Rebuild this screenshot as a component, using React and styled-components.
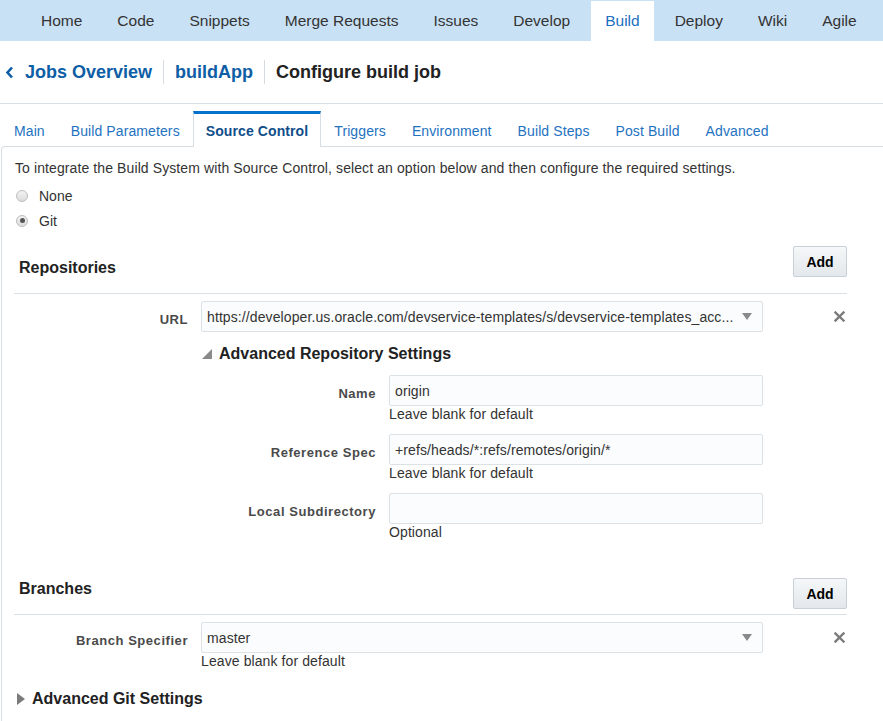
import React from "react";
import styled, { createGlobalStyle } from "styled-components";

const GlobalStyle = createGlobalStyle`
  body {
    margin: 0;
    background: #fff;
    font-family: "Liberation Sans", Arial, sans-serif;
    color: #333;
  }
`;

const navItems = ["Home", "Code", "Snippets", "Merge Requests", "Issues", "Develop", "Build", "Deploy", "Wiki", "Agile"];
const tabs = ["Main", "Build Parameters", "Source Control", "Triggers", "Environment", "Build Steps", "Post Build", "Advanced"];

const Close = () => (
  <svg width="11" height="11" viewBox="0 0 11 11">
    <path d="M1.5 1.5 L9.5 9.5 M9.5 1.5 L1.5 9.5" stroke="#7b7b7b" strokeWidth="2.4" strokeLinecap="square" />
  </svg>
);

const Caret = () => (
  <svg width="10" height="7" viewBox="0 0 10 7">
    <polygon points="0,0 10,0 5,7" fill="#8a8a8a" />
  </svg>
);

export default function App() {
  return (
    <Page>
      <GlobalStyle />
      <TopNav>
        {navItems.map((n) => (
          <NavItem key={n} $active={n === "Build"}>{n}</NavItem>
        ))}
      </TopNav>

      <Breadcrumb>
        <BackLink>
          <svg width="9" height="13" viewBox="0 0 9 13">
            <path d="M7 1.5 L2.5 6.5 L7 11.5" fill="none" stroke="#0e5ea6" strokeWidth="2.6" />
          </svg>
          <Crumb $link>Jobs Overview</Crumb>
        </BackLink>
        <Crumb $link $sep>buildApp</Crumb>
        <Crumb $sep>Configure build job</Crumb>
      </Breadcrumb>

      <TabBar>
        {tabs.map((t) => (
          <Tab key={t} $active={t === "Source Control"}>{t}</Tab>
        ))}
      </TabBar>

      <Panel>
        <Intro>To integrate the Build System with Source Control, select an option below and then configure the required settings.</Intro>
        <RadioList>
          <RadioRow><Radio /> None</RadioRow>
          <RadioRow><Radio $checked /> Git</RadioRow>
        </RadioList>

        <Section>
          <SectionHeader $top={13} $bottom={15}>
            <SectionTitle $pad={12}>Repositories</SectionTitle>
            <AddButton>Add</AddButton>
          </SectionHeader>

          <FormRow>
            <Label>URL</Label>
            <Field>
              <FieldText>https://developer.us.oracle.com/devservice-templates/s/devservice-templates_acc...</FieldText>
              <Caret />
            </Field>
            <CloseCell><Close /></CloseCell>
          </FormRow>

          <Nested>
            <Disclosure $mt={12} $pl={1}>
              <svg width="10" height="10" viewBox="0 0 10 10">
                <polygon points="10,0 10,10 0,10" fill="#8a8a8a" />
              </svg>
              Advanced Repository Settings
            </Disclosure>

            <NestedRow>
              <Label>Name</Label>
              <Field><FieldText>origin</FieldText></Field>
              <Hint>Leave blank for default</Hint>
            </NestedRow>
            <NestedRow>
              <Label>Reference Spec</Label>
              <Field><FieldText>+refs/heads/*:refs/remotes/origin/*</FieldText></Field>
              <Hint>Leave blank for default</Hint>
            </NestedRow>
            <NestedRow>
              <Label>Local Subdirectory</Label>
              <Field />
              <Hint>Optional</Hint>
            </NestedRow>
          </Nested>

          <SectionHeader $top={37} $bottom={5}>
            <SectionTitle $pad={1}>Branches</SectionTitle>
            <AddButton>Add</AddButton>
          </SectionHeader>

          <FormRow>
            <Label>Branch Specifier</Label>
            <Field>
              <FieldText>master</FieldText>
              <Caret />
            </Field>
            <CloseCell><Close /></CloseCell>
            <Hint>Leave blank for default</Hint>
          </FormRow>

          <Disclosure $mt={19} $pl={3}>
            <svg width="8" height="12" viewBox="0 0 8 12">
              <polygon points="0,0 8,6 0,12" fill="#7b7b7b" />
            </svg>
            Advanced Git Settings
          </Disclosure>
        </Section>
      </Panel>
    </Page>
  );
}

const Page = styled.div`
  width: 883px;
  min-height: 721px;
  overflow: hidden;
`;

const TopNav = styled.nav`
  display: flex;
  align-items: flex-end;
  gap: 7px;
  height: 41px;
  padding-left: 27px;
  background: #c9e1f5;
`;

const NavItem = styled.div`
  height: 40px;
  line-height: 40px;
  padding: 0 14px;
  font-size: 15.5px;
  white-space: nowrap;
  color: ${(p) => (p.$active ? "#1a6fc1" : "#333")};
  background: ${(p) => (p.$active ? "#fff" : "transparent")};
`;

const Breadcrumb = styled.div`
  display: flex;
  align-items: center;
  height: 62px;
  padding-left: 5px;
  border-bottom: 1px solid #d9e0e6;
`;

const BackLink = styled.div`
  display: flex;
  align-items: center;
`;

const Crumb = styled.div`
  font-size: 18px;
  font-weight: bold;
  line-height: 24px;
  padding: 0 11px;
  color: ${(p) => (p.$link ? "#0e5ea6" : "#222")};
  border-left: ${(p) => (p.$sep ? "1px solid #d5dbe0" : "none")};
`;

const TabBar = styled.div`
  display: flex;
  align-items: flex-end;
  height: 42px;
  padding-left: 1px;
`;

const Tab = styled.div`
  position: relative;
  z-index: 1;
  box-sizing: content-box;
  padding: 2px 12px 0;
  height: 31px;
  line-height: 31px;
  margin-bottom: -1px;
  font-size: 14px;
  letter-spacing: 0.1px;
  white-space: nowrap;
  border: 1px solid transparent;
  border-top: 3px solid transparent;
  border-bottom: none;
  color: #1e72c0;
  ${(p) =>
    p.$active &&
    `
    background: #fff;
    color: #104e8a;
    font-weight: bold;
    border-color: #d6dde3;
    border-top-color: #0572ce;
  `}
`;

const Panel = styled.div`
  border-top: 1px solid #d6dde3;
  border-left: 1px solid #d6dde3;
  border-top-left-radius: 4px;
  margin-left: 1px;
  padding: 11px 0 14px 12px;
`;

const Intro = styled.p`
  margin: 0;
  padding-left: 1px;
  font-size: 14px;
  letter-spacing: 0.1px;
  line-height: 20px;
`;

const RadioList = styled.div`
  margin-top: 5px;
  padding-left: 2px;
`;

const RadioRow = styled.label`
  display: flex;
  align-items: center;
  gap: 11px;
  height: 25px;
  font-size: 14px;
  color: #333;
`;

const Radio = styled.span`
  position: relative;
  width: 12px;
  height: 12px;
  box-sizing: border-box;
  border-radius: 50%;
  border: 1px solid #bdbdbd;
  background: linear-gradient(#f2f2f2, #dcdcdc);

  &::after {
    content: "";
    display: ${(p) => (p.$checked ? "block" : "none")};
    position: absolute;
    left: 2.5px;
    top: 2.5px;
    width: 5px;
    height: 5px;
    border-radius: 50%;
    background: #555;
  }
`;

const Section = styled.div`
  width: 833px;
`;

const SectionHeader = styled.div`
  display: flex;
  justify-content: space-between;
  align-items: flex-start;
  margin-top: ${(p) => p.$top}px;
  padding-bottom: ${(p) => p.$bottom}px;
  border-bottom: 1px solid #d9e0e6;
`;

const SectionTitle = styled.h2`
  margin: 0;
  padding: ${(p) => p.$pad}px 0 0 5px;
  font-size: 16px;
  line-height: 20px;
  font-weight: bold;
  color: #222;
`;

const AddButton = styled.button`
  width: 54px;
  height: 31px;
  padding: 0;
  border: 1px solid #c7d0d8;
  border-radius: 2px;
  background: linear-gradient(#f5f7f8, #e3e8ec);
  font-family: inherit;
  font-size: 14px;
  font-weight: bold;
  color: #000;
`;

const FormRow = styled.div`
  display: grid;
  grid-template-columns: 174px 562px 1fr;
  column-gap: 13px;
  margin-top: 7px;
`;

const Nested = styled.div`
  margin-left: 187px;
`;

const NestedRow = styled.div`
  display: grid;
  grid-template-columns: 175px 374px;
  column-gap: 13px;
  margin-top: 11px;
`;

const Label = styled.div`
  height: 31px;
  box-sizing: border-box;
  padding-top: 7px;
  line-height: 24px;
  text-align: right;
  font-size: 13px;
  font-weight: bold;
  letter-spacing: 0.55px;
  color: #4a4a4a;
  white-space: nowrap;
`;

const Field = styled.div`
  display: flex;
  align-items: center;
  gap: 8px;
  height: 31px;
  box-sizing: border-box;
  padding: 0 10px 0 5px;
  border: 1px solid #dbe1e5;
  border-radius: 2px;
  background: #fbfcfd;
`;

const FieldText = styled.span`
  flex: 1;
  overflow: hidden;
  white-space: nowrap;
  font-size: 14px;
  letter-spacing: 0.1px;
  color: #333;
`;

const CloseCell = styled.div`
  display: flex;
  align-items: center;
  justify-content: flex-end;
  padding-right: 2px;
`;

const Hint = styled.div`
  grid-column: 2;
  font-size: 14px;
  letter-spacing: 0.1px;
  line-height: 17px;
  color: #333;
`;

const Disclosure = styled.div`
  display: flex;
  align-items: center;
  gap: 7px;
  margin-top: ${(p) => p.$mt}px;
  padding-left: ${(p) => p.$pl}px;
  font-size: 16px;
  line-height: 20px;
  font-weight: bold;
  color: #222;
`;
